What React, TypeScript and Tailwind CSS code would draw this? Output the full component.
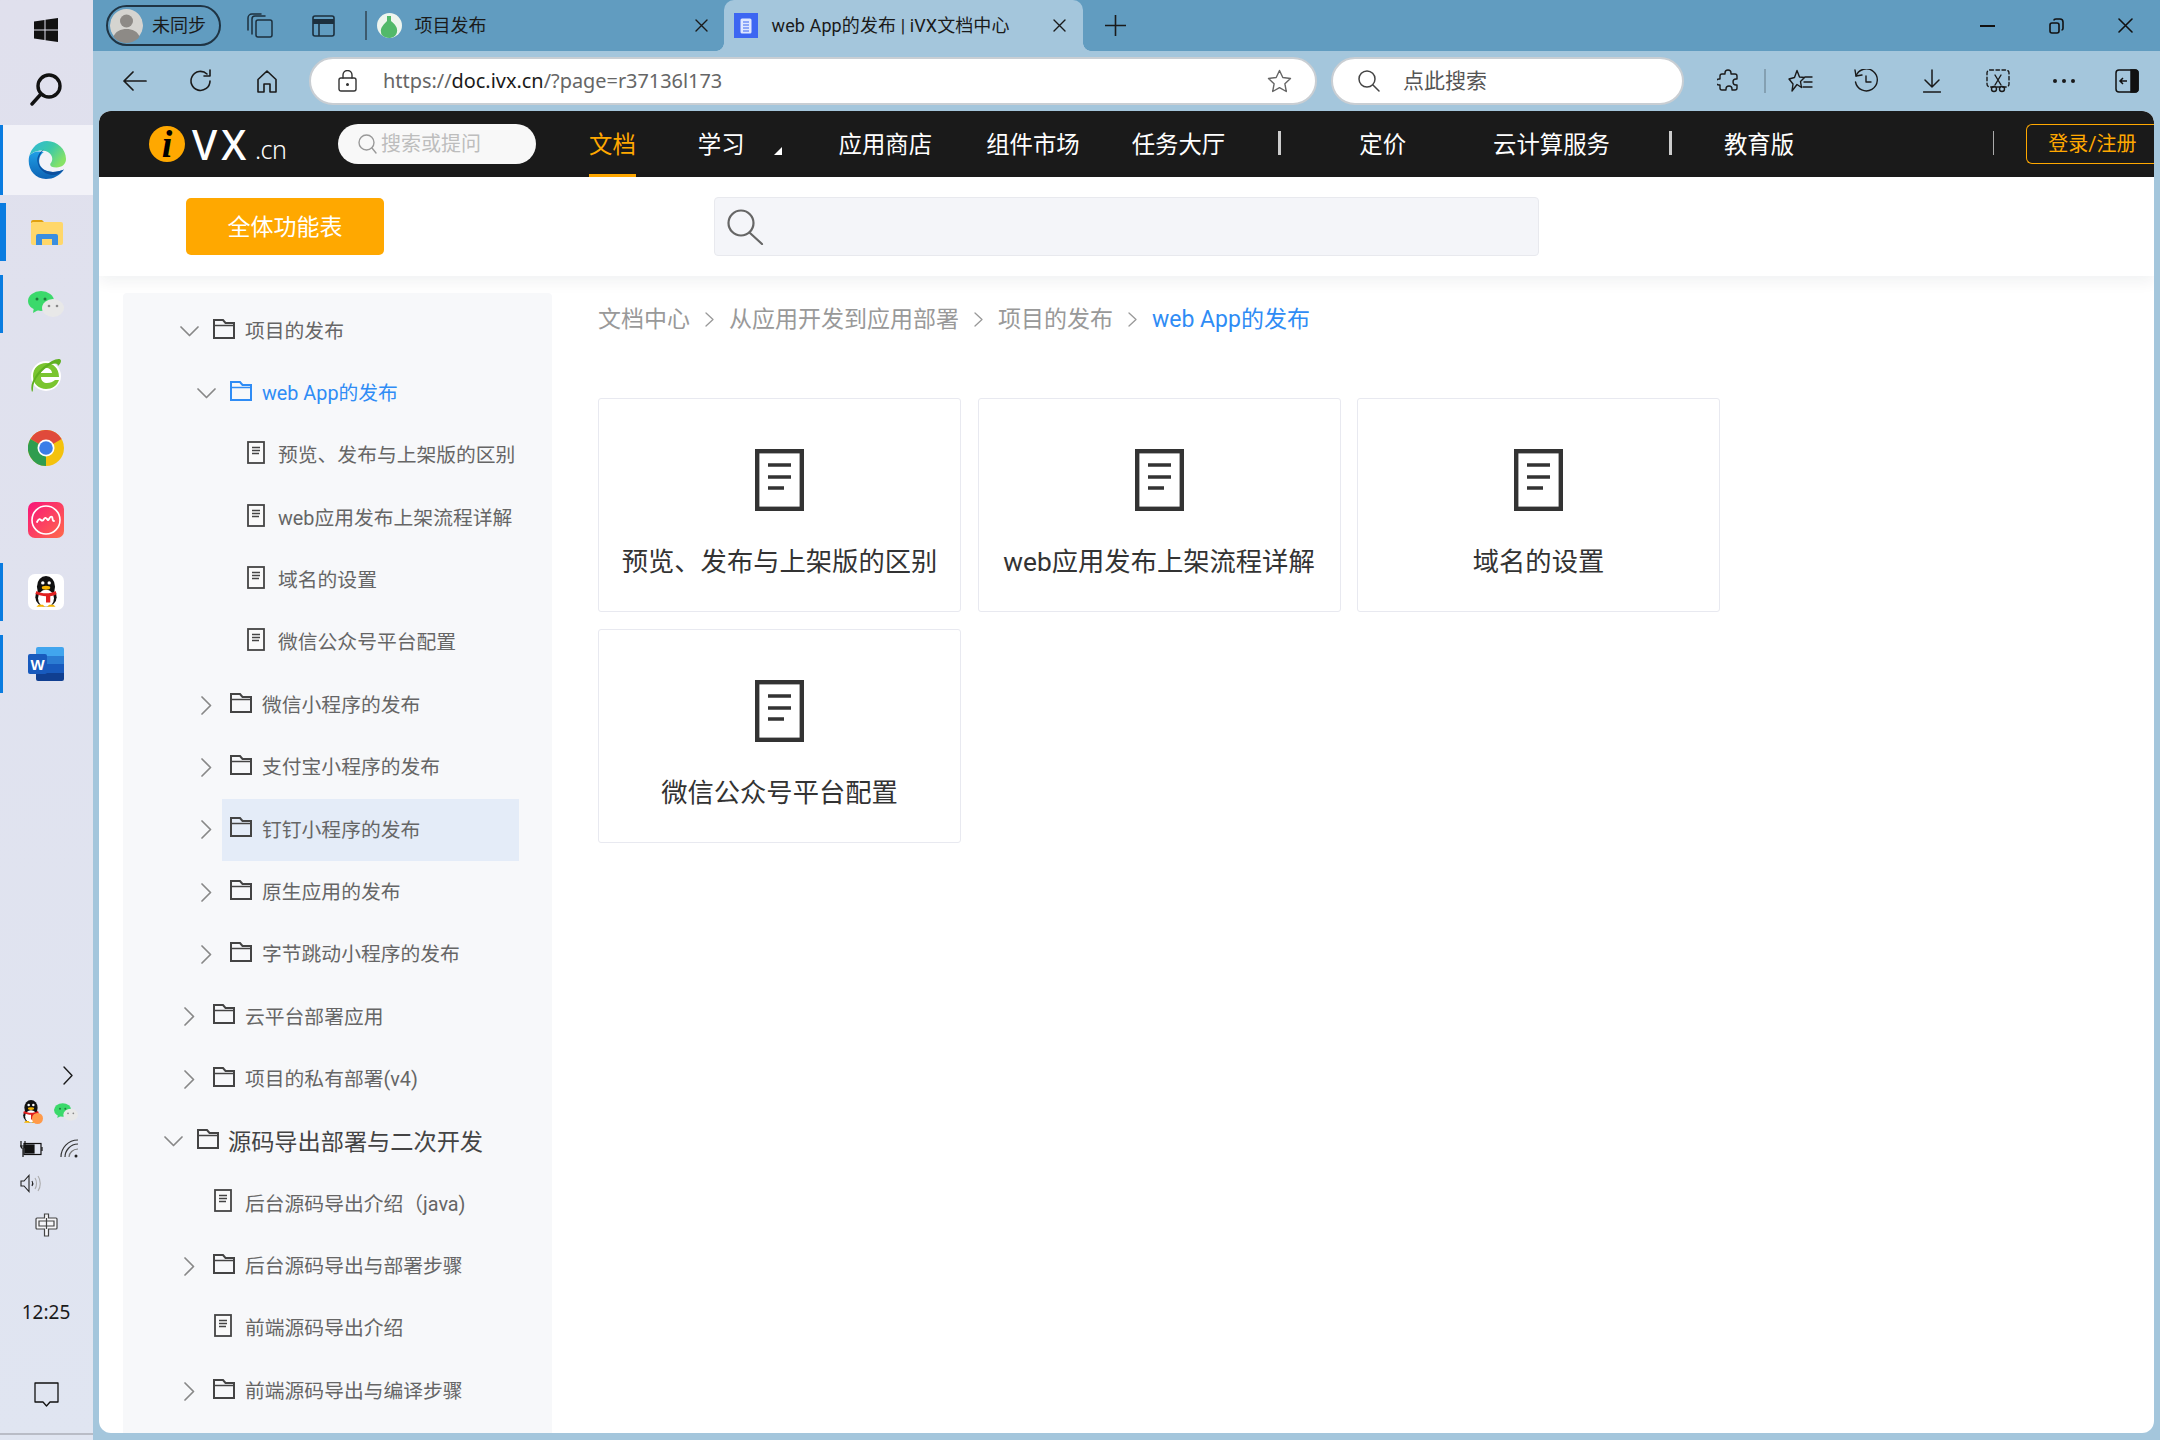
import React from "react";

const Stroke = ({ w, h, vb, children, sw = 1.6, color = "#1a1a1a", className = "" }: { w: number; h: number; vb: string; children: React.ReactNode; sw?: number; color?: string; className?: string }) => (
  <svg width={w} height={h} viewBox={vb} fill="none" stroke={color} strokeWidth={sw} strokeLinecap="round" strokeLinejoin="round" className={`shrink-0 ${className}`}>
    {children}
  </svg>
);

const Edge = () => (
  <svg width="38" height="38" viewBox="0 0 36 36" className="shrink-0">
    <defs>
      <linearGradient id="edgeA" x1="0" y1="0" x2="1" y2="0.6">
        <stop offset="0" stopColor="#2fb6dc" />
        <stop offset="0.55" stopColor="#3cc9a8" />
        <stop offset="1" stopColor="#86e266" />
      </linearGradient>
      <linearGradient id="edgeB" x1="0" y1="0" x2="0" y2="1">
        <stop offset="0" stopColor="#1f9fe6" />
        <stop offset="1" stopColor="#0d62b4" />
      </linearGradient>
    </defs>
    <path d="M1 15C3 6 10 0 18 0c10 0 18 8 18 17 0 5-4 8-9 8-4 0-6-1-6-3 0-1 2-2 2-5 0-5-5-8-10-8C8 9 3 11 1 15z" fill="url(#edgeA)" />
    <path d="M1 15C-1 26 6 36 17 36c7 0 13-3 17-9-4 2-10 3-14 2-6-1-11-6-9-13 .5-2 2-4 4-5.500C8 9 3 11 1 15z" fill="url(#edgeB)" />
    <path d="M15 8c-4 2-7 7-6 12 1 6 6 11 12 12 5 1 10-1 13-5-4 2-10 3-14 2-6-1-10-5-10-10 0-4 2-8 5-11z" fill="#0c4f9e" />
  </svg>
);

const Files = () => (
  <svg width="33" height="27" viewBox="0 0 33 27" className="shrink-0">
    <path d="M1 3a2 2 0 0 1 2-2h9l3 3H1z" fill="#e0a010" />
    <rect x="1" y="3" width="32" height="23" rx="2" fill="#ffd76a" />
    <path d="M6 26V17a2 2 0 0 1 2-2h18a2 2 0 0 1 2 2v9h-6v-6H12v6z" fill="#3a8ee0" />
    <rect x="12" y="20" width="10" height="6" fill="#ffd76a" />
  </svg>
);

const WeChat = ({ w = 36, h = 26 }: { w?: number; h?: number }) => (
  <svg width={w} height={h} viewBox="0 0 36 26" className="shrink-0">
    <ellipse cx="13" cy="10" rx="13" ry="10" fill="#3bd96b" />
    <path d="M6 16l-1 6 7-4z" fill="#3bd96b" />
    <ellipse cx="25" cy="17" rx="11" ry="9" fill="#e8e8e8" />
    <circle cx="9" cy="8" r="1.500" fill="#1f7a3d" />
    <circle cx="17" cy="8" r="1.500" fill="#1f7a3d" />
    <circle cx="21" cy="15" r="1.300" fill="#888" />
    <circle cx="29" cy="15" r="1.300" fill="#888" />
  </svg>
);

const IE = () => (
  <svg width="32" height="36" viewBox="0 0 32 36" className="shrink-0">
    <ellipse cx="16" cy="18" rx="15" ry="15" fill="#fff" />
    <path d="M3 18C3 10 9 5 16 5s13 5 13 14H11c0 4 3 6 6 6 3 0 6-1 8-3h4c-2 6-7 9-13 9C9 31 3 26 3 18zm8-3h11c0-3-3-5-5.500-5S11 12 11 15z" fill="#7ac52f" />
    <path d="M2 34C-1 26 6 12 22 3c4-2 9-3 9 0 0 2-2 4-3 5 0-3-3-3-6-2C12 11 3 22 3 30c0 2 0 3-1 4z" fill="#5fb020" />
  </svg>
);

const Chrome = () => (
  <svg width="36" height="36" viewBox="0 0 36 36" className="shrink-0">
    <circle cx="18" cy="18" r="18" fill="#f4c20d" />
    <path d="M18 18L2.400 9A18 18 0 0 1 33.600 9z" fill="#e04a3b" />
    <path d="M18 18L2.400 9A18 18 0 0 0 18 36z" fill="#2f9d4f" />
    <circle cx="18" cy="18" r="8.500" fill="#fff" />
    <circle cx="18" cy="18" r="6.800" fill="#3b7de8" />
  </svg>
);

const Meitu = () => (
  <svg width="36" height="36" viewBox="0 0 36 36" className="shrink-0">
    <defs>
      <linearGradient id="meitu" x1="0" y1="0" x2="1" y2="1">
        <stop offset="0" stopColor="#f8147a" />
        <stop offset="1" stopColor="#ff6a4a" />
      </linearGradient>
    </defs>
    <rect width="36" height="36" rx="7" fill="url(#meitu)" />
    <circle cx="18" cy="18" r="14" fill="none" stroke="#fff" strokeWidth="1.600" />
    <path d="M9 20c2-4 3-3 4-2s2 1 3-1 2-1 3 0 1 2 2 0 2-3 3-2 0 4 2 4" fill="none" stroke="#fff" strokeWidth="1.800" strokeLinecap="round" />
  </svg>
);

const Penguin = ({ size = 28 }: { size?: number }) => (
  <svg width={size} height={size * 1.1} viewBox="0 0 28 31" className="shrink-0">
    <ellipse cx="14" cy="10" rx="8.500" ry="10" fill="#111" />
    <ellipse cx="14" cy="20" rx="10" ry="9" fill="#111" />
    <ellipse cx="14" cy="21" rx="7.500" ry="8" fill="#fff" />
    <path d="M5 14c5 3 13 3 18 0l1 3c-3 2-5 2-6 2v6h-4v-6c-3 0-7-1-10-2z" fill="#e02020" />
    <ellipse cx="14" cy="11" rx="4" ry="1.800" fill="#f5b400" />
    <circle cx="11" cy="6.500" r="1.600" fill="#fff" />
    <circle cx="17" cy="6.500" r="1.600" fill="#fff" />
    <path d="M5 29h8l-2-2H7zM15 29h8l-2-2h-4z" fill="#f5b400" />
  </svg>
);

const Word = () => (
  <div className="relative w-[36px] h-[34px] shrink-0">
    <div className="ml-[8px] w-[28px] h-[34px] rounded-[2px] overflow-hidden flex flex-col">
      <div className="h-1/4 bg-[#41a5ee]" />
      <div className="h-1/4 bg-[#2b7cd3]" />
      <div className="h-1/4 bg-[#185abd]" />
      <div className="h-1/4 bg-[#103f91]" />
    </div>
    <div className="absolute left-0 top-[7px] w-[19px] h-[20px] rounded-[2px] bg-[#185abd] flex items-center justify-center text-white text-[15px] font-bold leading-none font-['Liberation_Sans',sans-serif]">W</div>
  </div>
);

const TaskCell = ({ children, bar = "", className = "" }: { children: React.ReactNode; bar?: string; className?: string }) => (
  <div className={`relative h-[58px] flex items-center justify-center pr-[1px] ${className}`}>
    {bar && <div className={`absolute left-0 top-0 bottom-0 bg-[#0a7ce0] ${bar}`} />}
    {children}
  </div>
);

const Taskbar = () => (
  <div className="w-[93px] h-full shrink-0 flex flex-col bg-gradient-to-b from-[#e0e0ed] to-[#e0e5f1]">
    <div className="h-[60px] flex items-center justify-center pr-[1px]">
      <svg width="24" height="24" viewBox="0 0 24 24" fill="#111">
        <path d="M0 3.500 10.500 2v9.500H0zM11.500 1.800 24 0v11.500H11.500zM0 12.500h10.500V22L0 20.500zM11.500 12.500H24V24l-12.500-1.800z" />
      </svg>
    </div>
    <div className="h-[65px] flex items-center justify-center pb-[7px] pr-[1px]">
      <Stroke w={34} h={34} vb="0 0 34 34" sw={3.4} color="#111">
        <circle cx="20" cy="14" r="11" />
        <path d="M12 22 3 32" />
      </Stroke>
    </div>
    <div className="relative h-[70px] bg-[#f2f2f8] flex items-center justify-center">
      <div className="absolute left-0 top-0 bottom-0 w-[3px] bg-[#0a7ce0]" />
      <Edge />
    </div>
    <TaskCell bar="w-[6px]" className="mt-[8px]"><Files /></TaskCell>
    <TaskCell bar="w-[3px]" className="mt-[14px]"><WeChat /></TaskCell>
    <TaskCell className="mt-[14px]"><IE /></TaskCell>
    <TaskCell className="mt-[14px]"><Chrome /></TaskCell>
    <TaskCell className="mt-[14px]"><Meitu /></TaskCell>
    <TaskCell bar="w-[3px]" className="mt-[14px]">
      <div className="w-[36px] h-[36px] rounded-[7px] bg-white flex items-center justify-center"><Penguin size={30} /></div>
    </TaskCell>
    <TaskCell bar="w-[3px]" className="mt-[14px]"><Word /></TaskCell>

    <div className="mt-[367px] h-[31px] flex items-center pl-[63px]">
      <Stroke w={10} h={19} vb="0 0 10 19" sw={1.4}><path d="M1 1l8 8.500L1 18" /></Stroke>
    </div>
    <div className="h-[38px] flex items-center pl-[20px] gap-[12px] mt-[2px]">
      <div className="relative">
        <Penguin size={22} />
        <div className="absolute -right-[1px] bottom-0 w-[11px] h-[11px] rounded-full bg-[#ff9a4a]" />
      </div>
      <WeChat w={24} h={20} />
    </div>
    <div className="h-[35px] flex items-center pl-[19px] gap-[17px]">
      <svg width="24" height="18" viewBox="0 0 24 18" fill="none" stroke="#111" strokeWidth="1.200">
        <rect x="5" y="3.500" width="17" height="11" />
        <rect x="6" y="5" width="9" height="8" fill="#111" />
        <path d="M23 7v4" />
        <path d="M1 6h6M2 1v5M6 1v5M2 6c0 3 4 3 4 0M4 9v8" />
      </svg>
      <svg width="19" height="19" viewBox="0 0 19 19" fill="none" stroke="#333" strokeWidth="1.200">
        <path d="M1 18C1 9 8 1 18 1" />
        <path d="M5 18C5 12 10 5 18 5" />
        <path d="M9 18c0-4 4-8 9-8" stroke="#777" />
        <circle cx="16" cy="17" r="1.500" fill="#222" stroke="none" />
      </svg>
    </div>
    <div className="h-[35px] flex items-center pl-[20px]">
      <svg width="23" height="19" viewBox="0 0 23 19" fill="none" stroke="#222" strokeWidth="1.100">
        <path d="M1 7v5h3l5 5.500V1.500L4 7z" />
        <path d="M12 7c1 1.500 1 3.500 0 5" />
        <path d="M15 4c2 3 2 8 0 11M18 2c3 4 3 11 0 15" stroke="#aaa" />
      </svg>
    </div>
    <div className="h-[48px] flex items-center pl-[35px]">
      <svg width="23" height="24" viewBox="0 0 23 24" fill="none" stroke="#444" strokeWidth="1.200">
        <path d="M9.500 1h4v4H21a1 1 0 0 1 1 1v9a1 1 0 0 1-1 1h-7.500v7h-4v-7H2a1 1 0 0 1-1-1V6a1 1 0 0 1 1-1h7.500z" fill="#f6f6f9" />
        <path d="M4 8h15v5H4zM11.500 5v11" />
      </svg>
    </div>
    <div className="h-[64px] flex items-center justify-center text-[19px] leading-none text-[#1a1a1a] mt-[31px] pr-[1px] font-['Noto_Sans',sans-serif]">12:25</div>
    <div className="h-[26px] flex justify-center mt-[38px]">
      <Stroke w={25} h={25} vb="0 0 25 25" sw={1.300} color="#111"><path d="M1 1h23v19h-8l-3.500 4L9 20H1z" /></Stroke>
    </div>
    <div className="mt-auto h-[7px] border-t-2 border-t-[#b9bcc6]" />
  </div>
);

const TabClose = () => (
  <Stroke w={13} h={13} vb="0 0 13 13" sw={1.400}><path d="M1 1l11 11M12 1 1 12" /></Stroke>
);

const TabBar = () => (
  <div className="h-[51px] bg-[#619cc0] flex items-center pr-[27px]">
    <div className="ml-[13px] w-[115px] h-[41px] rounded-full border-2 border-[#1f3444] flex items-center pl-[2px] text-[18px] text-[#1a1a1a] leading-none">
      <svg width="33" height="35" viewBox="0 0 33 35" className="shrink-0 rounded-full">
        <circle cx="16.500" cy="17.500" r="16.500" fill="#d5d4d0" />
        <circle cx="16.500" cy="13" r="6.500" fill="#8d8a86" />
        <path d="M3 30c2-7 8-9 13.500-9S28 23 30 30c-3 3.500-8 5-13.500 5S6 33.500 3 30z" fill="#8d8a86" />
      </svg>
      <span className="ml-[9px]">未同步</span>
    </div>
    <div className="ml-[26px]">
      <Stroke w={26} h={25} vb="0 0 26 25" sw={1.500} color="#1c2f3d">
        <rect x="9" y="7" width="16" height="17" rx="2" />
        <path d="M5 21V6a3 3 0 0 1 3-3h10" />
        <path d="M1 17V5a4 4 0 0 1 4-4h9" />
      </Stroke>
    </div>
    <div className="ml-[39px]">
      <svg width="23" height="22" viewBox="0 0 23 22" fill="none" stroke="#1c2f3d" strokeWidth="1.600">
        <rect x="1" y="1" width="21" height="20" rx="2" />
        <path d="M1 6.500h21" strokeWidth="5" />
        <path d="M7 6v15" />
      </svg>
    </div>
    <div className="ml-[30px] w-[1.500px] h-[29px] bg-[#3c5a6e]" />
    <div className="ml-[10px] w-[25px] h-[25px] rounded-full bg-[#eef5ee] flex items-center justify-center overflow-hidden">
      <svg width="18" height="24" viewBox="0 0 18 24"><path d="M7 2h4v5c4 3 7 7 6 11-1 4-4 6-8 6s-8-2-8-6C0 14 4 10 7 7z" fill="#52b96a" /></svg>
    </div>
    <span className="ml-[13px] text-[18px] text-[#1a1a1a] w-[280px] leading-none">项目发布</span>
    <TabClose />
    <div className="relative ml-[16px] w-[359px] h-[51px] rounded-t-[10px] bg-[#a4c6dc] flex items-center pl-[10px]">
      <div className="absolute -left-[8px] bottom-0 w-[8px] h-[8px] bg-[radial-gradient(circle_at_0_0,transparent_7.500px,#a4c6dc_8px)]" />
      <div className="absolute -right-[8px] bottom-0 w-[8px] h-[8px] bg-[radial-gradient(circle_at_100%_0,transparent_7.500px,#a4c6dc_8px)]" />
      <div className="w-[24px] h-[25px] bg-[#3d66f2] flex items-center justify-center shrink-0">
        <svg width="12" height="16" viewBox="0 0 12 16">
          <rect x="0.500" y="0.500" width="11" height="15" rx="1.500" fill="#dfe7ff" />
          <path d="M3 4h6M3 7h6M3 10h6M3 13h6" stroke="#3d66f2" strokeWidth="1.200" />
        </svg>
      </div>
      <span className="ml-[14px] text-[18px] text-[#1a1a1a] w-[281px] whitespace-nowrap leading-none tracking-[0.1px]">web App的发布 | iVX文档中心</span>
      <TabClose />
    </div>
    <div className="ml-[22px]">
      <Stroke w={21} h={21} vb="0 0 21 21" sw={1.600}><path d="M10.500 0v21M0 10.500h21" /></Stroke>
    </div>
    <div className="ml-auto flex items-center gap-[54px]">
      <div className="w-[15px] h-[2px] bg-[#111]" />
      <svg width="15" height="16" viewBox="0 0 15 16" fill="none" stroke="#111" strokeWidth="1.600">
        <rect x="1" y="5" width="9" height="10" rx="2" />
        <path d="M5 2.500C5 1.500 6 1 7 1h4c2 0 3 1 3 3v6c0 1-.5 2-1.500 2" />
      </svg>
      <Stroke w={15} h={15} vb="0 0 15 15" sw={1.600} color="#111"><path d="M1 1l13 13M14 1 1 14" /></Stroke>
    </div>
  </div>
);

const ToolBar = () => (
  <div className="h-[60px] bg-[#a4c6dc] flex items-center">
    <div className="ml-[30px]">
      <Stroke w={24} h={20} vb="0 0 24 20" sw={1.700}><path d="M23 10H1M10 1l-9 9 9 9" /></Stroke>
    </div>
    <div className="ml-[42px]">
      <Stroke w={24} h={24} vb="0 0 24 24" sw={1.600}>
        <path d="M21 12a9.500 9.500 0 1 1-3-7" />
        <path d="M21 1v6h-6" />
      </Stroke>
    </div>
    <div className="ml-[43px]">
      <Stroke w={22} h={23} vb="0 0 22 23" sw={1.600}>
        <path d="M2 9.500 11 1l9 8.500V22h-6v-8H8v8H2z" />
      </Stroke>
    </div>
    <div className="ml-[31px] w-[1008px] h-[48px] rounded-full bg-white border-2 border-[#c9ced3] flex items-center pl-[27px] pr-[23px]">
      <Stroke w={19} h={22} vb="0 0 19 22" sw={1.400} color="#333">
        <rect x="1" y="8" width="17" height="13" rx="2" />
        <path d="M5 8V5a4.500 4.500 0 0 1 9 0v3" />
        <circle cx="9.500" cy="14.500" r="0.800" fill="#333" />
      </Stroke>
      <span className="ml-[26px] text-[19.900px] leading-none text-[#666] font-['Noto_Sans',sans-serif]">https://<span className="text-[#1a1a1a]">doc.ivx.cn</span>/?page=r37136l173</span>
      <div className="ml-auto">
        <Stroke w={25} h={24} vb="0 0 25 24" sw={1.400} color="#666">
          <path d="M12.500 1.500l3.300 7 7.700 1-5.600 5.300 1.400 7.700-6.800-3.800-6.800 3.800 1.400-7.700L1.500 9.500l7.700-1z" />
        </Stroke>
      </div>
    </div>
    <div className="ml-[14px] w-[353px] h-[48px] rounded-full bg-white border-2 border-[#c9ced3] flex items-center pl-[25px]">
      <Stroke w={22} h={22} vb="0 0 22 22" sw={1.500} color="#444">
        <circle cx="9" cy="9" r="8" />
        <path d="M15 15l6 6" />
      </Stroke>
      <span className="ml-[23px] text-[21px] leading-none text-[#555]">点此搜索</span>
    </div>
    <div className="ml-[33px]">
      <Stroke w={22} h={24} vb="0 0 22 24" sw={1.400}>
        <path d="M8 4a3 3 0 0 1 6 0v1h4a2 2 0 0 1 2 2v3h-1a3 3 0 0 0 0 6h1v3a2 2 0 0 1-2 2h-3v-1a3 3 0 0 0-6 0v1H5a2 2 0 0 1-2-2v-3H2a3 3 0 0 1 0-6h1V7a2 2 0 0 1 2-2h3z" />
      </Stroke>
    </div>
    <div className="ml-[25px] w-[2px] h-[24px] bg-[#84a0b2]" />
    <div className="ml-[22px]">
      <Stroke w={25} h={24} vb="0 0 25 24" sw={1.400}>
        <path d="M9 1.500l2.500 6.500 5 .5-4 4 1 6-4.500-3L4 22l1-7-4-5 5.500-1.500z" />
        <path d="M17 8h7M16 13h8M15 18h9" />
      </Stroke>
    </div>
    <div className="ml-[41px]">
      <Stroke w={24} h={24} vb="0 0 24 24" sw={1.400}>
        <path d="M2 7a11 11 0 1 1-.5 6" />
        <path d="M1 1l1 6 6-1" />
        <path d="M12 7v6h5" />
      </Stroke>
    </div>
    <div className="ml-[45px]">
      <Stroke w={18} h={24} vb="0 0 18 24" sw={1.500}>
        <path d="M9 1v17M2 11l7 7 7-7M0.500 23h17" />
      </Stroke>
    </div>
    <div className="ml-[45px]">
      <Stroke w={24} h={24} vb="0 0 24 24" sw={1.400}>
        <rect x="1" y="1" width="22" height="17" rx="3" strokeDasharray="3.500 2.500" />
        <path d="M9 6l6 10M15 6 9 16" />
        <circle cx="8" cy="20" r="2.500" />
        <circle cx="16" cy="20" r="2.500" />
      </Stroke>
    </div>
    <div className="ml-[43px] flex gap-[5px]">
      <div className="w-[4px] h-[4px] rounded-full bg-[#1a1a1a]" />
      <div className="w-[4px] h-[4px] rounded-full bg-[#1a1a1a]" />
      <div className="w-[4px] h-[4px] rounded-full bg-[#1a1a1a]" />
    </div>
    <div className="ml-[40px]">
      <svg width="24" height="24" viewBox="0 0 24 24" fill="none" stroke="#111" strokeWidth="1.500">
        <rect x="1" y="1" width="22" height="22" rx="3" />
        <path d="M16 1h4a3 3 0 0 1 3 3v16a3 3 0 0 1-3 3h-4z" fill="#111" />
        <path d="M12 12H5M8 9l-3 3 3 3" />
      </svg>
    </div>
  </div>
);

const NavItem = ({ children, className = "" }: { children: React.ReactNode; className?: string }) => (
  <span className={`shrink-0 whitespace-nowrap mt-[3px] ${className}`}>{children}</span>
);

const NavBar = () => (
  <div className="h-[66px] bg-[#1a1a1a] flex items-center text-[23.400px] leading-none text-white rounded-t-[10px]">
    <div className="ml-[50px] w-[36px] h-[36px] rounded-full bg-[#ffa800] flex items-center justify-center text-black italic font-bold text-[38px] leading-none font-['Liberation_Serif',serif] shrink-0">i</div>
    <span className="ml-[7px] w-[63px] shrink-0 text-[41px] leading-none font-['Noto_Sans',sans-serif] font-medium tracking-[4px]">VX</span>
    <span className="w-[30px] shrink-0 text-[25px] leading-none font-['Noto_Sans',sans-serif] font-light mt-[11px] tracking-[-0.5px]">.cn</span>
    <div className="ml-[53px] w-[198px] h-[40px] rounded-full bg-[#f8f8f8] flex items-center pl-[20px] shrink-0">
      <Stroke w={19} h={20} vb="0 0 19 20" sw={1.400} color="#999">
        <circle cx="8.500" cy="8.500" r="7.500" />
        <path d="M14 14l4 5" />
      </Stroke>
      <span className="ml-[4px] text-[20px] text-[#bdbdbd]">搜索或提问</span>
    </div>
    <div className="relative ml-[53px] h-[66px] flex items-center shrink-0 text-[#ffa800] pt-[3px]">
      文档
      <div className="absolute left-0 right-0 bottom-0 h-[3px] bg-[#ffa800]" />
    </div>
    <NavItem className="ml-[62px]">学习</NavItem>
    <div className="ml-[29px] mt-[14px] w-0 h-0 border-l-[8px] border-l-transparent border-b-[8px] border-b-white shrink-0" />
    <NavItem className="ml-[57px]">应用商店</NavItem>
    <NavItem className="ml-[54px]">组件市场</NavItem>
    <NavItem className="ml-[52px]">任务大厅</NavItem>
    <div className="ml-[53px] w-[3px] h-[24px] bg-[#ccc] mb-[2px] shrink-0" />
    <NavItem className="ml-[78px]">定价</NavItem>
    <NavItem className="ml-[87px]">云计算服务</NavItem>
    <div className="ml-[59px] w-[3px] h-[24px] bg-[#ccc] mb-[2px] shrink-0" />
    <NavItem className="ml-[52px]">教育版</NavItem>
    <div className="ml-[199px] w-px h-[24px] bg-[#aaa] mb-[2px] shrink-0" />
    <div className="ml-[32px] w-[130px] h-[40px] border border-[#ffa800] border-r-0 rounded-l-[6px] flex items-center pl-[21px] text-[20px] text-[#ffa800] shrink-0 whitespace-nowrap">登录/注册</div>
  </div>
);

const SubHeader = () => (
  <div className="relative z-10 h-[99px] bg-white shadow-[0_6px_14px_rgba(20,30,50,0.06)] flex items-center">
    <div className="ml-[87px] w-[198px] h-[57px] rounded-[5px] bg-[#ffa800] text-white text-[23px] leading-none flex items-center justify-center pt-[2px]">全体功能表</div>
    <div className="ml-[330px] w-[825px] h-[59px] rounded-[4px] bg-[#f4f5f9] border border-[#e8e9ee] flex items-center pl-[11px]">
      <Stroke w={40} h={36} vb="0 0 40 36" sw={2.200} color="#666">
        <circle cx="15" cy="14" r="12.500" />
        <path d="M24 24l12 11" />
      </Stroke>
    </div>
  </div>
);

const Chevron = ({ open }: { open: boolean }) =>
  open ? (
    <Stroke w={19} h={11} vb="0 0 19 11" sw={1.700} color="#888"><path d="M1 1l8.500 8.500L18 1" /></Stroke>
  ) : (
    <Stroke w={11} h={19} vb="0 0 11 19" sw={1.700} color="#888" className="ml-[4px]"><path d="M1 1l8.500 8.500L1 18" /></Stroke>
  );

const FolderIcon = ({ color, className = "" }: { color: string; className?: string }) => (
  <svg width="22" height="20" viewBox="0 0 22 20" fill="none" stroke={color} strokeWidth="2" className={`shrink-0 ${className}`}>
    <path d="M1 1h9l2.500 3H21v15H1z" />
    <path d="M1 6.500h20" strokeWidth="1.500" />
  </svg>
);

const FileIcon = () => (
  <svg width="18" height="23" viewBox="0 0 18 23" fill="none" stroke="#444" className="shrink-0 -mt-[6px]">
    <rect x="1" y="1" width="16" height="21" strokeWidth="1.800" fill="#fafafa" />
    <path d="M5 6.500h8M5 9.500h8M5 12.500h7" strokeWidth="1.400" />
  </svg>
);

type Row = { t: string; kind: "folder" | "file"; lvl: 0 | 1 | 2 | 3; open?: boolean; active?: boolean; hl?: boolean; big?: boolean };

const rows: Row[] = [
  { t: "项目的发布", kind: "folder", lvl: 1, open: true },
  { t: "web App的发布", kind: "folder", lvl: 2, open: true, active: true },
  { t: "预览、发布与上架版的区别", kind: "file", lvl: 3 },
  { t: "web应用发布上架流程详解", kind: "file", lvl: 3 },
  { t: "域名的设置", kind: "file", lvl: 3 },
  { t: "微信公众号平台配置", kind: "file", lvl: 3 },
  { t: "微信小程序的发布", kind: "folder", lvl: 2 },
  { t: "支付宝小程序的发布", kind: "folder", lvl: 2 },
  { t: "钉钉小程序的发布", kind: "folder", lvl: 2, hl: true },
  { t: "原生应用的发布", kind: "folder", lvl: 2 },
  { t: "字节跳动小程序的发布", kind: "folder", lvl: 2 },
  { t: "云平台部署应用", kind: "folder", lvl: 1 },
  { t: "项目的私有部署(v4)", kind: "folder", lvl: 1 },
  { t: "源码导出部署与二次开发", kind: "folder", lvl: 0, open: true, big: true },
  { t: "后台源码导出介绍（java)", kind: "file", lvl: 1 },
  { t: "后台源码导出与部署步骤", kind: "folder", lvl: 1 },
  { t: "前端源码导出介绍", kind: "file", lvl: 1 },
  { t: "前端源码导出与编译步骤", kind: "folder", lvl: 1 },
];

const folderPad = { 0: "pl-[41px]", 1: "pl-[57px]", 2: "pl-[74px]", 3: "pl-[90px]" };

const TreeRow = ({ r }: { r: Row }) => {
  const textCls = r.active ? "text-[#2f8cf5]" : "text-[#666]";
  if (r.kind === "file") {
    return (
      <div className={`h-[62.350px] flex items-center text-[19.800px] leading-none whitespace-nowrap ${r.lvl === 3 ? "pl-[124px]" : "pl-[91px]"} ${textCls}`}>
        <FileIcon />
        <span className="ml-[13px] mt-[1px]">{r.t}</span>
      </div>
    );
  }
  return (
    <div className={`h-[62.350px] flex items-center leading-none whitespace-nowrap ${folderPad[r.lvl]} ${r.big ? "text-[23.200px] text-[#444]" : `text-[19.800px] ${textCls}`}`}>
      <div className="w-[25px] shrink-0 flex items-center"><Chevron open={!!r.open} /></div>
      <div className={`w-[297px] h-full flex items-center pl-[8px] ${r.hl ? "bg-[#e4ecf8]" : ""}`}>
        <FolderIcon color={r.active ? "#2f8cf5" : "#444"} className="-mt-[5px]" />
        <span className={`mt-[1px] ${r.big ? "ml-[9px]" : "ml-[10px]"}`}>{r.t}</span>
      </div>
    </div>
  );
};

const Sidebar = () => (
  <div className="ml-[24px] mt-[17px] w-[429px] shrink-0 h-[1140px] bg-[#f7f8fa] rounded-t-[4px] pt-[7px] overflow-hidden">
    {rows.map((r) => (
      <TreeRow key={r.t} r={r} />
    ))}
  </div>
);

const Sep = () => (
  <Stroke w={9} h={15} vb="0 0 9 15" sw={1.300} color="#999" className="mx-[15px]"><path d="M1 1l7 6.500L1 14" /></Stroke>
);

const Card = ({ title }: { title: string }) => (
  <div className="w-[363px] h-[214px] bg-white border border-[#e8e9f0] rounded-[3px] flex flex-col items-center pt-[50px]">
    <svg width="49" height="62" viewBox="0 0 49 62" fill="none" stroke="#333">
      <rect x="2.200" y="2.200" width="44.600" height="57.600" strokeWidth="4.400" />
      <path d="M13 16h23M13 28h23M13 39h16" strokeWidth="3.500" />
    </svg>
    <div className="mt-[38px] text-[26.300px] leading-none text-[#333] whitespace-nowrap">{title}</div>
  </div>
);

const Main = () => (
  <div className="ml-[46px] mt-[17px] flex-1 min-w-0">
    <div className="h-[50px] flex items-center pt-[2px] text-[23px] leading-none text-[#999] whitespace-nowrap">
      <span>文档中心</span>
      <Sep />
      <span>从应用开发到应用部署</span>
      <Sep />
      <span>项目的发布</span>
      <Sep />
      <span className="text-[#2f8cf5]">web App的发布</span>
    </div>
    <div className="mt-[55px] w-[1130px] flex flex-wrap gap-x-[16.500px] gap-y-[17px]">
      <Card title="预览、发布与上架版的区别" />
      <Card title="web应用发布上架流程详解" />
      <Card title="域名的设置" />
      <Card title="微信公众号平台配置" />
    </div>
  </div>
);

export default function App() {
  return (
    <div className="w-[2160px] h-[1440px] flex overflow-hidden bg-[#a4c6dc] font-['Roboto','Noto_Sans_CJK_SC',sans-serif]">
      <Taskbar />
      <div className="flex-1 min-w-0 flex flex-col">
        <TabBar />
        <ToolBar />
        <div className="ml-[6px] mr-[6px] h-[1322px] bg-white rounded-[12px] overflow-hidden flex flex-col">
          <NavBar />
          <SubHeader />
          <div className="flex flex-1 min-h-0">
            <Sidebar />
            <Main />
          </div>
        </div>
      </div>
    </div>
  );
}
